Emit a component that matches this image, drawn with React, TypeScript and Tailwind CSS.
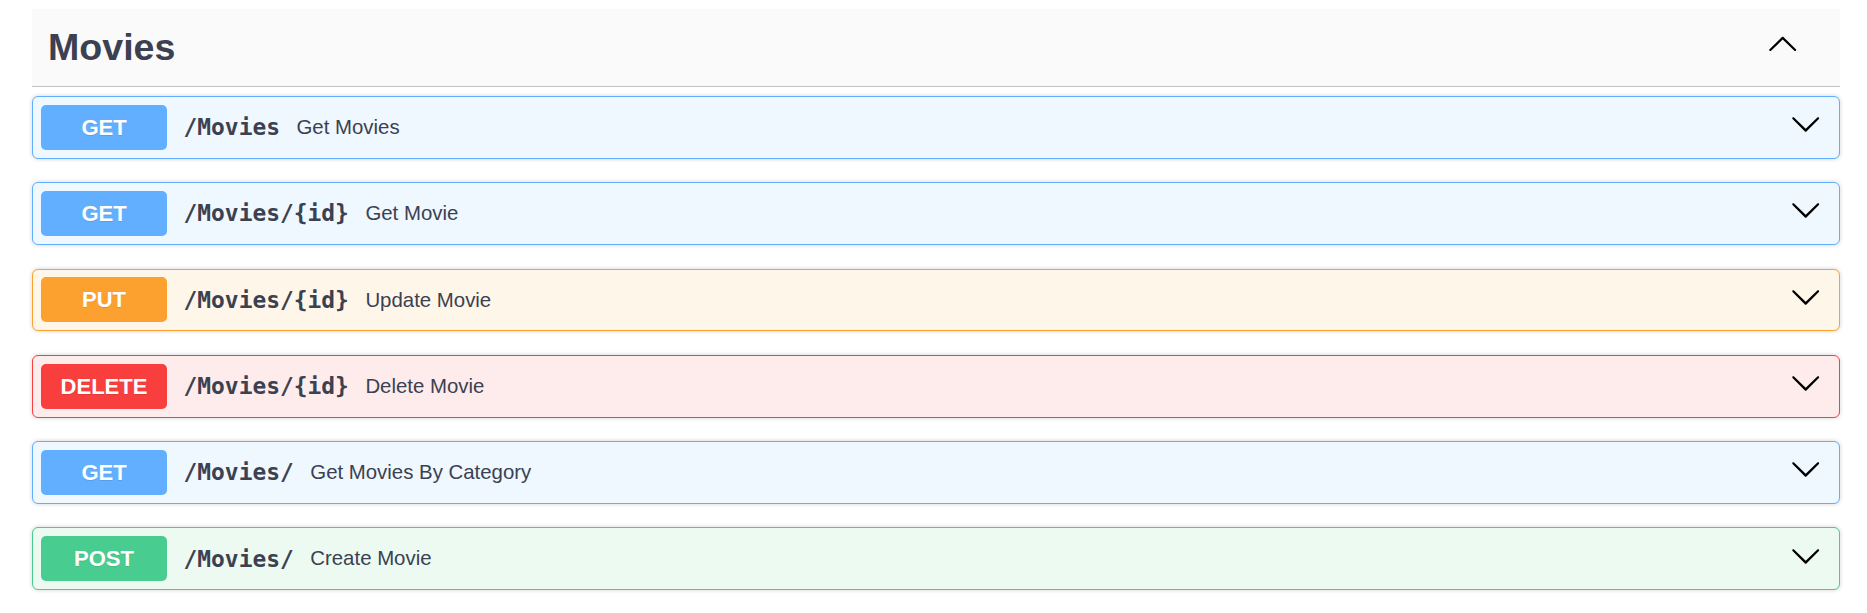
import React from "react";

type Op = {
  method: string;
  path: string;
  desc: string;
  border: string;
  bg: string;
  badge: string;
};

const ops: Op[] = [
  { method: "GET", path: "/Movies", desc: "Get Movies", border: "border-[#61affe]", bg: "bg-[#eff7ff]", badge: "bg-[#61affe]" },
  { method: "GET", path: "/Movies/{id}", desc: "Get Movie", border: "border-[#61affe]", bg: "bg-[#eff7ff]", badge: "bg-[#61affe]" },
  { method: "PUT", path: "/Movies/{id}", desc: "Update Movie", border: "border-[#fca130]", bg: "bg-[#fff6ea]", badge: "bg-[#fca130]" },
  { method: "DELETE", path: "/Movies/{id}", desc: "Delete Movie", border: "border-[#f93e3e]", bg: "bg-[#feecec]", badge: "bg-[#f93e3e]" },
  { method: "GET", path: "/Movies/", desc: "Get Movies By Category", border: "border-[#61affe]", bg: "bg-[#eff7ff]", badge: "bg-[#61affe]" },
  { method: "POST", path: "/Movies/", desc: "Create Movie", border: "border-[#49cc90]", bg: "bg-[#edfaf2]", badge: "bg-[#49cc90]" },
];

const ARROW =
  "M17.418 6.109c.272-.268.709-.268.979 0s.271.701 0 .969l-7.908 7.83c-.27.268-.707.268-.979 0l-7.908-7.83c-.27-.268-.27-.701 0-.969.271-.268.709-.268.979 0L10 13.25l7.418-7.141z";

function Arrow({ className }: { className?: string }) {
  return (
    <svg viewBox="0 0 20 20" className={className} fill="#000">
      <path d={ARROW} />
    </svg>
  );
}

export default function App() {
  return (
    <div className="min-h-[613px] w-full bg-white pt-[9px] font-['Liberation_Sans',Arial,sans-serif]">
      <div className="ml-[32px] w-[1808px]">
        <div className="flex h-[78px] items-center justify-between border-b border-[rgba(59,65,81,0.3)] bg-[#fafafa] pl-[16px] pr-[42px]">
          <h3 className="text-[37.6px] font-bold leading-none text-[#3b4151]">Movies</h3>
          <Arrow className="-mt-[5px] h-[31.4px] w-[31.4px] rotate-180" />
        </div>
        <div className="mt-[9px] flex flex-col gap-[23.6px]">
          {ops.map((op, i) => (
            <div
              key={i}
              className={`flex h-[62.7px] items-center rounded-[6px] border ${op.border} ${op.bg} pl-[8px] pr-[18px] shadow-[0_0_4.7px_rgba(0,0,0,0.19)]`}
            >
              <div
                className={`flex h-[45px] w-[126px] shrink-0 items-center justify-center rounded-[5px] ${op.badge} text-[22px] font-bold text-white [text-shadow:0_1px_0_rgba(0,0,0,0.1)]`}
              >
                {op.method}
              </div>
              <span className="ml-[16.5px] font-['DejaVu_Sans_Mono',monospace] text-[22.9px] font-bold text-[#3b4151]">
                {op.path}
              </span>
              <span className="ml-[16.5px] flex-1 text-[20.4px] text-[#3b4151]">{op.desc}</span>
              <Arrow className="-mt-[7px] h-[31.4px] w-[31.4px]" />
            </div>
          ))}
        </div>
      </div>
    </div>
  );
}
